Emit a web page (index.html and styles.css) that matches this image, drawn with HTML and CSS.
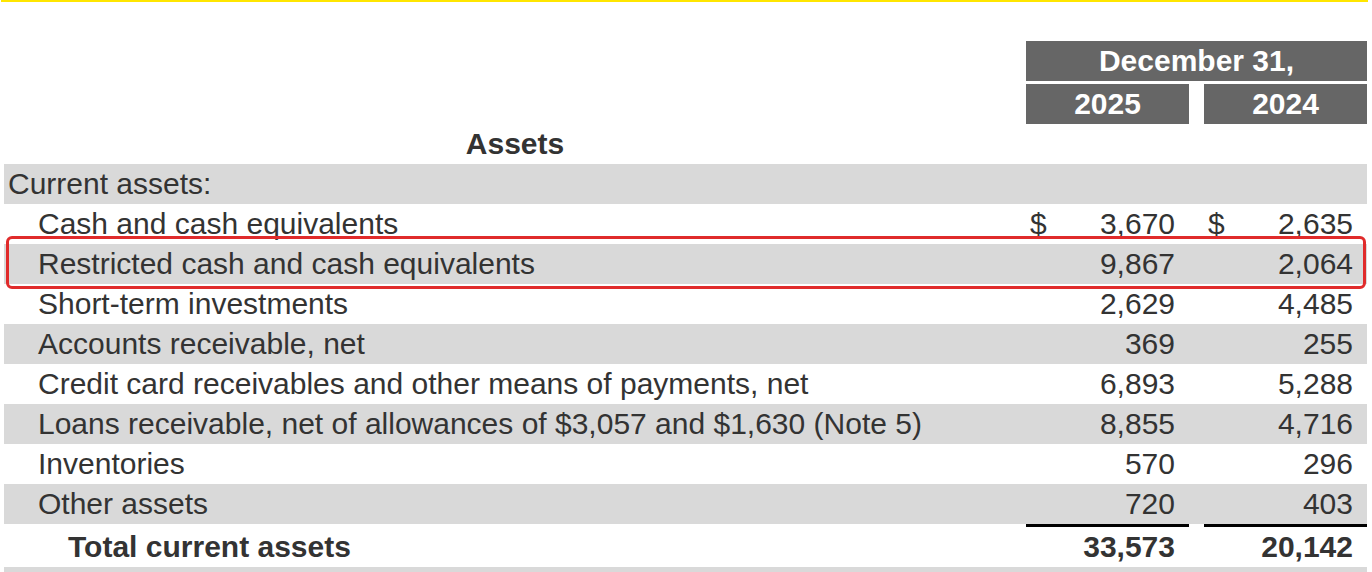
FILE: index.html
```html
<!DOCTYPE html>
<html lang="en">
<head>
<meta charset="utf-8">
<title>Balance sheet – Assets</title>
<link rel="stylesheet" href="styles.css">
</head>
<body>
<div class="topline"></div>
<div class="sheet">
  <div class="row head1">
    <div></div>
    <div class="hcell span3">December 31,</div>
  </div>
  <div class="row head2">
    <div></div>
    <div class="hcell">2025</div>
    <div></div>
    <div class="hcell">2024</div>
  </div>
  <div class="row">
    <div class="title">Assets</div>
  </div>
  <div class="row band">
    <div class="label">Current assets:</div>
  </div>
  <div class="row">
    <div class="label ind1">Cash and cash equivalents</div>
    <div class="num"><span>$</span><span>3,670</span></div>
    <div></div>
    <div class="num"><span>$</span><span>2,635</span></div>
  </div>
  <div class="row band marked">
    <div class="label ind1">Restricted cash and cash equivalents</div>
    <div class="num"><span></span><span>9,867</span></div>
    <div></div>
    <div class="num"><span></span><span>2,064</span></div>
    <div class="highlight"></div>
  </div>
  <div class="row">
    <div class="label ind1">Short-term investments</div>
    <div class="num"><span></span><span>2,629</span></div>
    <div></div>
    <div class="num"><span></span><span>4,485</span></div>
  </div>
  <div class="row band">
    <div class="label ind1">Accounts receivable, net</div>
    <div class="num"><span></span><span>369</span></div>
    <div></div>
    <div class="num"><span></span><span>255</span></div>
  </div>
  <div class="row">
    <div class="label ind1">Credit card receivables and other means of payments, net</div>
    <div class="num"><span></span><span>6,893</span></div>
    <div></div>
    <div class="num"><span></span><span>5,288</span></div>
  </div>
  <div class="row band">
    <div class="label ind1">Loans receivable, net of allowances of $3,057 and $1,630 (Note 5)</div>
    <div class="num"><span></span><span>8,855</span></div>
    <div></div>
    <div class="num"><span></span><span>4,716</span></div>
  </div>
  <div class="row">
    <div class="label ind1">Inventories</div>
    <div class="num"><span></span><span>570</span></div>
    <div></div>
    <div class="num"><span></span><span>296</span></div>
  </div>
  <div class="row band">
    <div class="label ind1">Other assets</div>
    <div class="num"><span></span><span>720</span></div>
    <div></div>
    <div class="num"><span></span><span>403</span></div>
  </div>
  <div class="row total">
    <div class="label ind2">Total current assets</div>
    <div class="num ruled"><span></span><span>33,573</span></div>
    <div></div>
    <div class="num ruled"><span></span><span>20,142</span></div>
  </div>
  <div class="row band tail"></div>
</div>
</body>
</html>
```

FILE: styles.css
```css
html, body {
  margin: 0;
  padding: 0;
  background: #ffffff;
}

body {
  font-family: "Liberation Sans", Arial, sans-serif;
  color: #333333;
  font-size: 30px;
  overflow: hidden;
}

.topline {
  height: 2px;
  margin-left: 1px;
  width: 1367px;
  background: #ffe600;
}

.sheet {
  margin-left: 4px;
  width: 1363px;
  padding-top: 39px;
}

.row {
  display: grid;
  grid-template-columns: 1022px 163px 15px 163px;
  height: 40px;
  line-height: 40px;
  position: relative;
}

.band {
  background: #d9d9d9;
}

.tail {
  height: 5px;
}

.head1 {
  margin-bottom: 3px;
}

.hcell {
  background: #666666;
  color: #ffffff;
  font-weight: bold;
  text-align: center;
  white-space: nowrap;
}

.span3 {
  grid-column: 2 / span 3;
}

.title {
  font-weight: bold;
  text-align: center;
}

.label {
  white-space: nowrap;
  padding-left: 4px;
}

.ind1 {
  padding-left: 34px;
}

.ind2 {
  padding-left: 64px;
  font-weight: bold;
}

.num {
  display: flex;
  justify-content: space-between;
  padding: 0 14px 0 4px;
  white-space: nowrap;
}

.total {
  height: 43px;
}

.total .label {
  padding-top: 3px;
}

.total .num {
  font-weight: bold;
}

.ruled {
  border-top: 3px solid #000000;
}

.highlight {
  position: absolute;
  top: -8px;
  left: 2px;
  right: 1px;
  bottom: -5px;
  border: 3px solid #e02b2b;
  border-radius: 6px;
  pointer-events: none;
}
```
